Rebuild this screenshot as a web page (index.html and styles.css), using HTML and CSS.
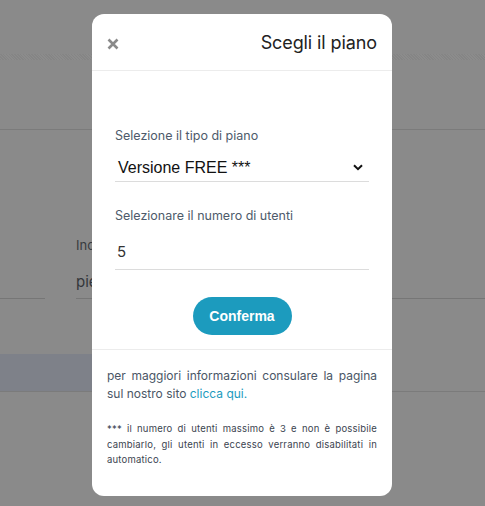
FILE: index.html
```html
<!DOCTYPE html>
<html lang="it">
<head>
<meta charset="utf-8">
<title>Scegli il piano</title>
<link rel="stylesheet" href="styles.css">
</head>
<body>
<div class="page">
  <div class="top-area"></div>
  <div class="dots"></div>
  <div class="top-rest"></div>
  <div class="form-area">
    <div class="col col-a"><div class="field-line"></div></div>
    <div class="col col-b">
      <div class="bg-label">Inc</div>
      <div class="bg-value">pie</div>
      <div class="field-line"></div>
    </div>
    <div class="col col-c"><div class="field-line"></div></div>
  </div>
  <div class="band-row">
    <div class="band"></div>
  </div>
</div>

<div class="modal">
  <div class="modal-header">
    <button class="close" aria-label="Chiudi">
      <svg width="12" height="12" viewBox="0 0 12 12"><path d="M1.5 1.5 L10.5 10.5 M10.5 1.5 L1.5 10.5" stroke="#8a8a8a" stroke-width="2.6" stroke-linecap="butt"/></svg>
    </button>
    <h2 class="title">Scegli il piano</h2>
  </div>
  <div class="modal-body">
    <label class="label">Selezione il tipo di piano</label>
    <div class="select">
      <span>Versione FREE ***</span>
      <svg class="chev" width="10" height="7" viewBox="0 0 10 7"><path d="M1 1.2 L5 5.2 L9 1.2" fill="none" stroke="#111" stroke-width="2"/></svg>
    </div>
    <label class="label label2">Selezionare il numero di utenti</label>
    <div class="input">5</div>
    <div class="btn-row"><button class="btn">Conferma</button></div>
  </div>
  <div class="modal-footer">
    <p class="info">per maggiori informazioni consulare la pagina sul nostro sito <a href="#">clicca qui.</a></p>
    <p class="note">*** il numero di utenti massimo è 3 e non è possibile cambiarlo, gli utenti in eccesso verranno disabilitati in automatico.</p>
  </div>
</div>
</body>
</html>
```

FILE: styles.css
```css
html, body {
  margin: 0;
  padding: 0;
  background: #8a8a8a;
  height: 100%;
  overflow: hidden;
}
.page {
  display: flex;
  flex-direction: column;
}
.top-area { height: 54px; }
.dots {
  height: 6px;
  background-image: repeating-linear-gradient(45deg, #858585 0 1px, #8c8c8c 1px 2px);
}
.top-rest {
  height: 69px;
  border-bottom: 1px solid #7b7b7b;
}
.form-area {
  display: flex;
  height: 169px;
}
.col {
  display: flex;
  flex-direction: column;
  justify-content: flex-end;
}
.col-a { width: 45px; margin-right: 31px; }
.col-b { width: 16px; overflow: hidden; }
.col-c { flex: 1; }
.field-line { border-bottom: 1px solid #767676; }
.bg-label {
  font-family: "Inter", sans-serif;
  font-size: 13px;
  color: #383b40;
  margin-bottom: 19px;
  white-space: nowrap;
}
.bg-value {
  font-family: "Inter", sans-serif;
  font-size: 15px;
  color: #33363a;
  margin-bottom: 7px;
  white-space: nowrap;
}
.band-row {
  margin-top: 55px;
  height: 37px;
  border-bottom: 1px solid #7b7b7b;
}
.band {
  width: 100px;
  height: 37px;
  background: #7e8189;
}

.modal {
  position: absolute;
  left: 92px;
  top: 14px;
  width: 300px;
  height: 482px;
  background: #fff;
  border-radius: 12px;
  display: flex;
  flex-direction: column;
  font-family: "Inter", "Liberation Sans", sans-serif;
}
.modal-header {
  height: 57px;
  border-bottom: 1px solid #ececec;
  display: flex;
  align-items: center;
  justify-content: space-between;
  padding: 0 15px 0 15px;
  box-sizing: border-box;
}
.close {
  border: 0;
  background: none;
  padding: 0;
  width: 12px;
  height: 12px;
  margin-top: 3px;
  display: flex;
}
.title {
  margin: 0;
  font-size: 18px;
  font-weight: 400;
  color: #222;
  letter-spacing: -0.1px;
}
.modal-body {
  padding: 57px 23px 0 23px;
  height: 279px;
  box-sizing: border-box;
  border-bottom: 1px solid #ececec;
}
.label {
  display: block;
  font-size: 12.5px;
  color: #4e5b6b;
  line-height: 16px;
}
.select {
  display: flex;
  justify-content: space-between;
  align-items: center;
  margin-top: 10px;
  height: 27px;
  border-bottom: 1px solid #dcdcdc;
  font-family: "Liberation Sans", Arial, sans-serif;
  font-size: 16px;
  color: #111;
  padding: 0 6px 0 3px;
}
.chev { margin-top: 0; }
.label2 { margin-top: 26px; }
.input {
  margin-top: 14px;
  height: 31px;
  border-bottom: 1px solid #dcdcdc;
  font-size: 15px;
  color: #333;
  line-height: 28px;
  padding-left: 2px;
}
.btn-row {
  display: flex;
  justify-content: center;
  margin-top: 27px;
}
.btn {
  width: 99px;
  height: 38px;
  border: 0;
  border-radius: 19px;
  background: #1c9bbe;
  color: #fff;
  font-family: "Liberation Sans", Arial, sans-serif;
  font-size: 14px;
  font-weight: 700;
  padding: 0;
}
.modal-footer {
  padding: 17px 15px 0 15px;
}
.info {
  margin: 0;
  font-size: 12px;
  line-height: 18px;
  color: #4a5666;
  text-align: justify;
}
.info a {
  color: #1c9bbe;
  text-decoration: none;
}
.note {
  margin: 18px 0 0 0;
  font-size: 9.5px;
  line-height: 15.5px;
  color: #3b4450;
  text-align: justify;
  letter-spacing: 0.2px;
}
```
